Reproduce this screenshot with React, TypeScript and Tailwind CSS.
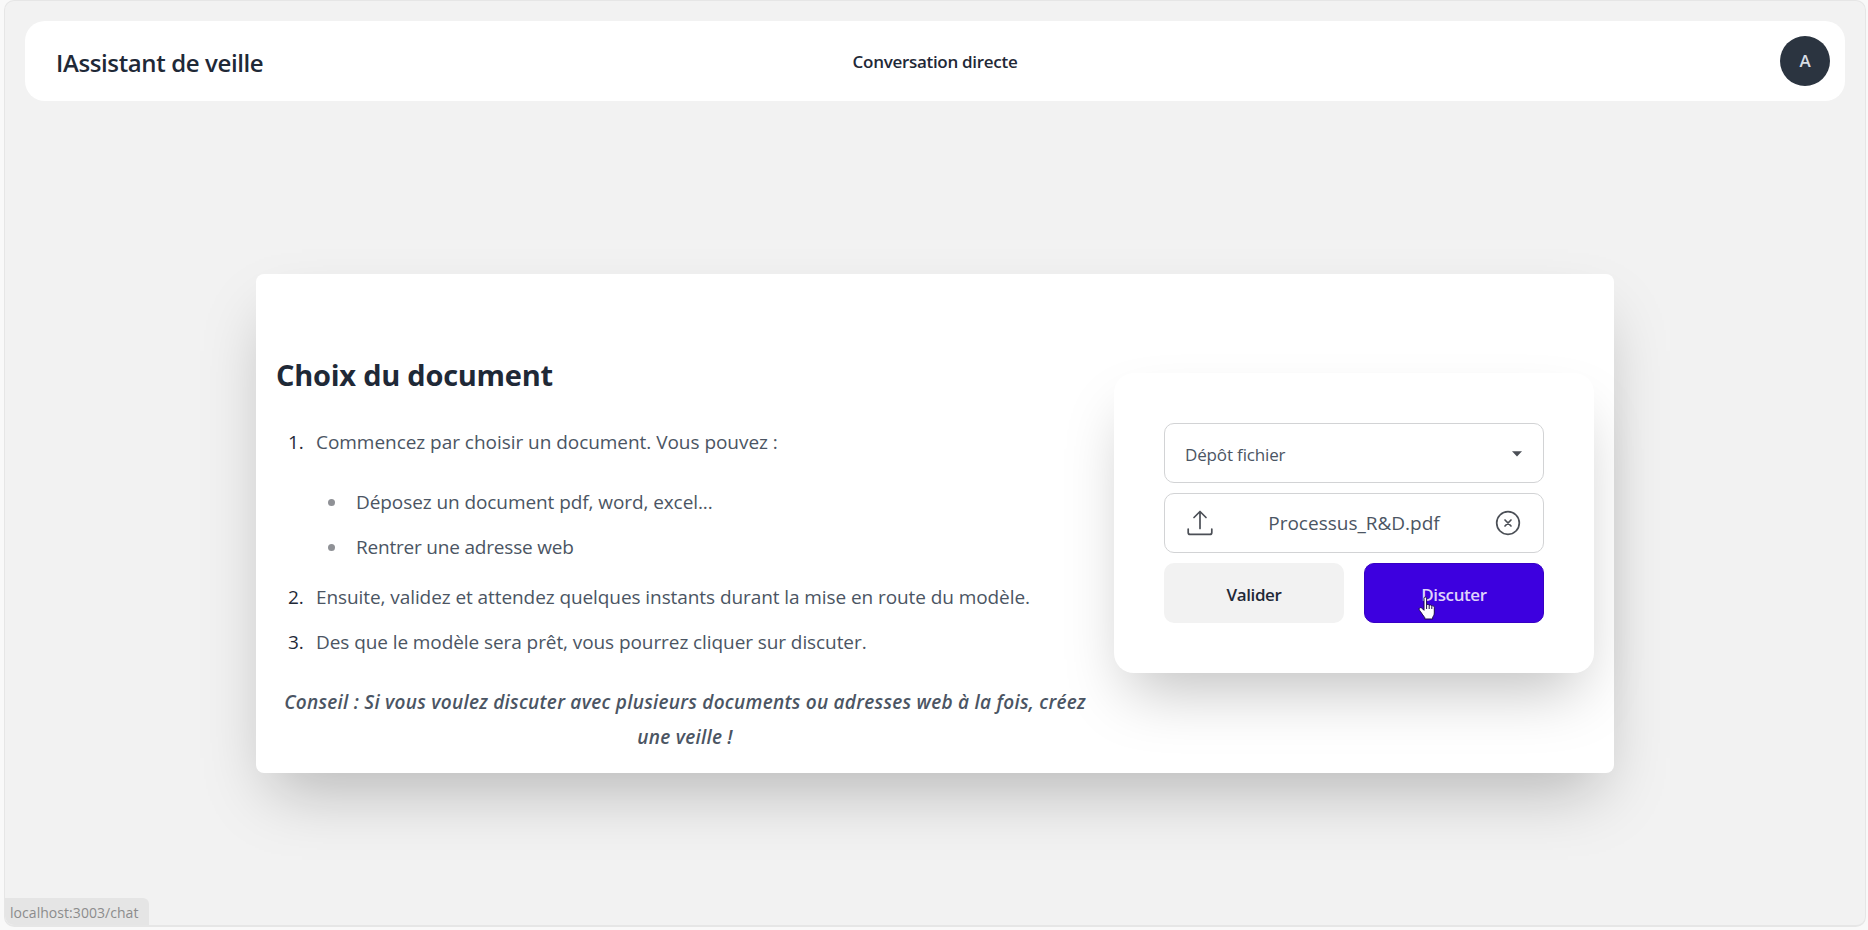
import React from "react";

function UploadIcon() {
  return (
    <svg width="26" height="26" viewBox="0 0 26 26" fill="none" stroke="#4b4f56" strokeWidth="1.7" strokeLinecap="round" strokeLinejoin="round">
      <path d="M13 18.5V1.5M7 7.5l6-6 6 6" />
      <path d="M1.2 19v3.400a2 2 0 0 0 2 2h19.600a2 2 0 0 0 2-2V19" />
    </svg>
  );
}

function ClearIcon() {
  return (
    <svg width="26" height="26" viewBox="0 0 26 26" fill="none" stroke="#4b4f56" strokeWidth="1.7" strokeLinecap="round">
      <circle cx="13" cy="13" r="11.3" />
      <path d="M10 10l6 6M16 10l-6 6" />
    </svg>
  );
}

function HandCursor() {
  return (
    <svg className="absolute left-[53px] top-[32px]" width="18" height="25" viewBox="0 0 18 25">
      <path
        d="M6 2.2C6 .6 8.6.6 8.6 2.2V9c.3-1 2.6-.8 2.6.5.5-1 2.6-.6 2.6.7.6-.8 2.5-.4 2.5 1.2V17c0 2-1 3.200-1.600 4.200V23H6.800v-1.300C5.500 20 4 17.800 2.600 15.800 1.200 14 .6 12.800 1.500 12c1-.8 2.300-.2 3.200.9L6 14.300z"
        fill="#fff"
        stroke="#1b0a4a"
        strokeWidth="1"
        strokeLinejoin="round"
      />
      <path d="M8.600 9v4M11.200 9.500V13M13.800 10.300V13" stroke="#1b0a4a" strokeWidth="1" />
    </svg>
  );
}

function Navbar() {
  return (
    <header className="grid h-20 grid-cols-[1fr_auto_1fr] items-center rounded-[20px] bg-white px-[15px] text-[#1f2937]">
      <div className="pt-[3px] pl-4 text-[24px] leading-8 font-semibold tracking-[-0.38px] whitespace-nowrap">IAssistant de veille</div>
      <div className="pt-px text-[17px] leading-6 font-semibold tracking-[-0.3px] whitespace-nowrap">Conversation directe</div>
      <div className="flex h-[50px] w-[50px] items-center justify-center justify-self-end rounded-full bg-[#2b3440] text-[17px] font-semibold text-[#d7dde4]">
        A
      </div>
    </header>
  );
}

function Instructions() {
  return (
    <div className="w-[818px] text-[19px] leading-[35px] tracking-[-0.08px] text-[#4b5563]">
      <h2 className="text-[29px] leading-[40px] font-bold tracking-[-0.25px] whitespace-nowrap text-[#1f2937]">Choix du document</h2>
      <ol className="mt-[30px]">
        <li>
          <div className="flex">
            <span className="w-10 pl-3 text-[#1f2937]">1.</span>
            <span className="tracking-[-0.04px] whitespace-nowrap">Commencez par choisir un document. Vous pouvez :</span>
          </div>
          <ul className="mt-[25px] flex flex-col gap-[10px] pl-[52px]">
            <li className="flex items-center">
              <span className="mr-[21px] h-[7px] w-[7px] rounded-full bg-[#8f9196]" />
              Déposez un document pdf, word, excel...
            </li>
            <li className="flex items-center tracking-[-0.2px]">
              <span className="mr-[21px] h-[7px] w-[7px] rounded-full bg-[#8f9196]" />
              Rentrer une adresse web
            </li>
          </ul>
        </li>
        <li className="mt-[15px] flex">
          <span className="w-10 pl-3 text-[#1f2937]">2.</span>
          <span className="whitespace-nowrap">Ensuite, validez et attendez quelques instants durant la mise en route du modèle.</span>
        </li>
        <li className="mt-[10px] flex">
          <span className="w-10 pl-3 text-[#1f2937]">3.</span>
          <span className="whitespace-nowrap">Des que le modèle sera prêt, vous pourrez cliquer sur discuter.</span>
        </li>
      </ol>
      <p className="mt-[25px] text-center font-semibold tracking-[0.26px] italic">
        <span className="whitespace-nowrap">Conseil : Si vous voulez discuter avec plusieurs documents ou adresses web à la fois, créez</span>
        <br />
        une veille !
      </p>
    </div>
  );
}

function DocumentForm() {
  return (
    <div className="flex h-[300px] w-[480px] flex-col gap-[10px] rounded-[20px] bg-white p-[50px] shadow-[0_31px_62px_-15px_rgba(0,0,0,0.25)]">
      <button className="flex h-[60px] items-center justify-between rounded-[10px] border border-[#d2d3d5] pr-[21px] pl-5 text-[17px] tracking-[-0.15px] text-[#4b5563]">
        <span className="pt-[3px]">Dépôt fichier</span>
        <svg className="mt-px" width="10" height="6" viewBox="0 0 10 6">
          <path d="M0 0.300h10L5 5.500z" fill="#4b4f56" />
        </svg>
      </button>
      <div className="grid h-[60px] grid-cols-[26px_1fr_26px] items-center rounded-[10px] border border-[#d2d3d5] px-[22px] text-[19px] text-[#4b5563]">
        <UploadIcon />
        <span className="pt-px text-center">Processus_R&amp;D.pdf</span>
        <ClearIcon />
      </div>
      <div className="grid grid-cols-2 gap-5">
        <button className="h-[60px] rounded-[10px] bg-[#f2f2f2] pt-[3px] text-[17px] font-semibold tracking-[-0.4px] text-[#1f2937]">Valider</button>
        <button className="relative h-[60px] rounded-[10px] border border-[#3700c4] bg-[#3d00df] pt-[3px] text-[17px] font-semibold tracking-[-0.4px] text-[#dfd3fb]">
          Discuter
          <HandCursor />
        </button>
      </div>
    </div>
  );
}

export default function App() {
  return (
    <div className="h-[930px] w-[1868px] overflow-hidden bg-[#f9f9f9] pb-1 pl-1 font-['Open_Sans','Noto_Sans',sans-serif]">
      <div className="relative flex h-[927px] w-[1862px] flex-col rounded-[10px] border border-b-2 border-[#e6e6e6] bg-[#f2f2f2] px-5 pt-5">
        <Navbar />
        <main className="mt-[173px] ml-[231px] flex h-[499px] w-[1358px] justify-between rounded-lg bg-white pr-5 pl-5 shadow-[0_31px_62px_-15px_rgba(0,0,0,0.25)]">
          <div className="pt-[81px]">
            <Instructions />
          </div>
          <div className="pt-[99px]">
            <DocumentForm />
          </div>
        </main>
        <div className="absolute bottom-0 left-0 flex h-[27px] w-[144px] items-center rounded-tr-md rounded-bl-[9px] bg-[#e5e5e5] pt-[2px] pl-[5px] text-[14px] tracking-[0.05px] text-[#8c8c8c]">
          localhost:3003/chat
        </div>
      </div>
    </div>
  );
}
